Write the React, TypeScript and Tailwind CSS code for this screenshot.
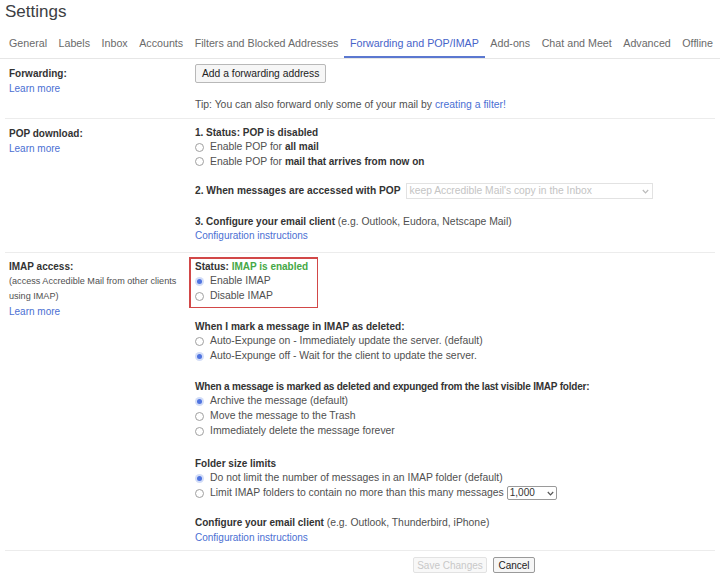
import React from "react";

function Radio({ checked }: { checked?: boolean }) {
  return checked ? (
    <span className="inline-flex items-center justify-center w-[9px] h-[9px] rounded-full bg-[#d3ddf7] shrink-0">
      <span className="block w-[5px] h-[5px] rounded-full bg-[#4f74e0]" />
    </span>
  ) : (
    <span className="inline-block w-[9px] h-[9px] rounded-full border border-solid border-[color:#a0a0a0] bg-white shrink-0" />
  );
}

function RadioRow({ checked, children, h = "h-[14.5px]" }: { checked?: boolean; children: React.ReactNode; h?: string }) {
  return (
    <div className={`flex items-center gap-[6px] ${h}`}>
      <Radio checked={checked} />
      <span className="text-[#505050] whitespace-nowrap text-[10.4px]">{children}</span>
    </div>
  );
}

function Chevron({ color = "#888" }: { color?: string }) {
  return (
    <svg width="7" height="5" viewBox="0 0 7 5" className="shrink-0">
      <path d="M0.8 1 L3.5 3.8 L6.2 1" fill="none" stroke={color} strokeWidth="1.2" />
    </svg>
  );
}

const link = "text-[#4b6fd3]";
const reg = "text-[#505050] text-[10.4px]";

export default function App() {
  const tabs = [
    "General",
    "Labels",
    "Inbox",
    "Accounts",
    "Filters and Blocked Addresses",
    "Forwarding and POP/IMAP",
    "Add-ons",
    "Chat and Meet",
    "Advanced",
    "Offline",
  ];
  return (
    <div
      className="w-[720px] h-[579px] bg-white overflow-hidden text-[10px] leading-[15px] text-[#444]"
      style={{ fontFamily: '"Liberation Sans", Arial, sans-serif' }}
    >
      {/* Title */}
      <div className="h-[33px] pl-[5px] pt-[2px] text-[17px] leading-[20px] text-[#3c4043]">Settings</div>

      {/* Tabs */}
      <div className="flex h-[26px] pl-[3.25px] border-b border-solid border-[color:#e6e6e6] text-[10.7px] text-[#6a6a6a] whitespace-nowrap">
        {tabs.map((t) => (
          <div
            key={t}
            className={
              t === "Forwarding and POP/IMAP"
                ? "px-[5.75px] pt-[3px] leading-[15px] border-b-[2px] border-solid border-[color:#5b78d0] text-[#4763c9]"
                : "px-[5.75px] pt-[3px] leading-[15px]"
            }
          >
            {t}
          </div>
        ))}
      </div>

      {/* Forwarding */}
      <div className="flex mx-[5px] border-b border-solid border-[color:#ececec] pt-[5px] pb-[6.5px]">
        <div className="w-[190px] pl-[4px] pt-[1.5px]">
          <div className="font-bold text-[#333]">Forwarding:</div>
          <div className={link}>Learn more</div>
        </div>
        <div>
          <div className="inline-flex items-center h-[19px] px-[6px] border border-solid border-[color:#b8b8b8] rounded-[2px] bg-[#f6f6f6] text-[#222] text-[10.3px]">
            Add a forwarding address
          </div>
          <div className={`mt-[13.5px] ${reg}`}>
            Tip: You can also forward only some of your mail by <span className={link}>creating a filter!</span>
          </div>
        </div>
      </div>

      {/* POP */}
      <div className="flex mx-[5px] border-b border-solid border-[color:#ececec] pt-[6.5px] pb-[8.25px]">
        <div className="w-[190px] pl-[4px]">
          <div className="font-bold text-[#333]">POP download:</div>
          <div className={link}>Learn more</div>
        </div>
        <div className="leading-[14.5px]">
          <div className="font-bold text-[#333]">1. Status: POP is disabled</div>
          <RadioRow>
            Enable POP for <b className="text-[#333] text-[10px]">all mail</b>
          </RadioRow>
          <RadioRow>
            Enable POP for <b className="text-[#333] text-[10px]">mail that arrives from now on</b>
          </RadioRow>
          <div className="flex items-center h-[16px] mt-[14px]">
            <span className="font-bold text-[#333] mr-[5px] text-[10.2px]">2. When messages are accessed with POP</span>
            <div className="flex items-center justify-between w-[247px] h-[16px] border border-solid border-[color:#e2e2e2] px-[3px] text-[#c4c4c4] text-[10.3px]">
              <span>keep Accredible Mail's copy in the Inbox</span>
              <Chevron color="#bbb" />
            </div>
          </div>
          <div className="mt-[15.75px]">
            <span className="font-bold text-[#333]">3. Configure your email client</span>{" "}
            <span className={reg}>(e.g. Outlook, Eudora, Netscape Mail)</span>
          </div>
          <div className={link}>Configuration instructions</div>
        </div>
      </div>

      {/* IMAP */}
      <div className="flex mx-[5px] border-b border-solid border-[color:#ececec] pt-[4px] pb-[5.5px]">
        <div className="w-[190px] pl-[4px] pt-[1.75px]">
          <div className="font-bold text-[#333]">IMAP access:</div>
          <div className="text-[9.1px] text-[#505050]">(access Accredible Mail from other clients</div>
          <div className="text-[9.1px] text-[#505050]">using IMAP)</div>
          <div className={link}>Learn more</div>
        </div>
        <div className="leading-[14.5px]">
          <div className="-ml-[6px] w-[129px] h-[51px] bg-[#d24848] p-[1.5px]">
            <div className="h-full bg-white pl-[4.5px] pt-[1.25px]">
              <div className="font-bold text-[#333]">
                Status: <span className="text-[#45a845]">IMAP is enabled</span>
              </div>
              <RadioRow checked>Enable IMAP</RadioRow>
              <RadioRow>Disable IMAP</RadioRow>
            </div>
          </div>

          <div className="mt-[11.75px]">
            <div className="font-bold text-[#333] text-[10.1px]">When I mark a message in IMAP as deleted:</div>
            <RadioRow>Auto-Expunge on - Immediately update the server. (default)</RadioRow>
            <RadioRow checked>Auto-Expunge off - Wait for the client to update the server.</RadioRow>
          </div>

          <div className="mt-[15.5px]">
            <div className="font-bold text-[#333] leading-[15px] tracking-[-0.2px] whitespace-nowrap">
              When a message is marked as deleted and expunged from the last visible IMAP folder:
            </div>
            <RadioRow checked h="h-[15px]">Archive the message (default)</RadioRow>
            <RadioRow h="h-[15px]">Move the message to the Trash</RadioRow>
            <RadioRow h="h-[15px]">Immediately delete the message forever</RadioRow>
          </div>

          <div className="mt-[16.75px]">
            <div className="font-bold text-[#333] leading-[15px]">Folder size limits</div>
            <RadioRow checked h="h-[15px]">Do not limit the number of messages in an IMAP folder (default)</RadioRow>
            <div className="flex items-center gap-[6px] h-[15px]">
              <Radio />
              <span className="text-[#505050] whitespace-nowrap text-[10.4px]">
                Limit IMAP folders to contain no more than this many messages
              </span>
              <div className="-ml-[3px] flex items-center justify-between w-[50px] h-[14px] border border-solid border-[color:#9a9a9a] rounded-[2px] px-[2px] text-[#333]">
                <span>1,000</span>
                <Chevron color="#555" />
              </div>
            </div>
          </div>

          <div className="mt-[14px] leading-[15px]">
            <div>
              <span className="font-bold text-[#333]">Configure your email client</span>{" "}
              <span className={reg}>(e.g. Outlook, Thunderbird, iPhone)</span>
            </div>
            <div className={link}>Configuration instructions</div>
          </div>
        </div>
      </div>

      {/* Buttons */}
      <div className="flex gap-[6px] pl-[413px] mt-[6px]">
        <div className="flex items-center justify-center w-[74px] h-[16px] border border-solid border-[color:#e2e2e2] rounded-[2px] bg-[#f8f8f8] text-[#c8c8c8]">
          Save Changes
        </div>
        <div className="flex items-center justify-center w-[42px] h-[16px] border border-solid border-[color:#9a9a9a] rounded-[2px] bg-[#f6f6f6] text-[#222]">
          Cancel
        </div>
      </div>
    </div>
  );
}
